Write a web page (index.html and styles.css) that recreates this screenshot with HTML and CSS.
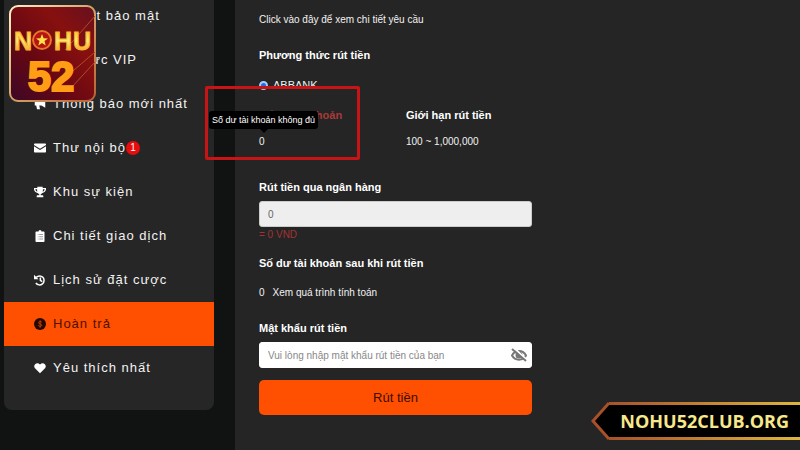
FILE: index.html
```html
<!DOCTYPE html>
<html lang="vi">
<head>
    <meta charset="UTF-8">
    <meta name="viewport" content="width=device-width, initial-scale=1.0">
    <title>Rút tiền</title>
    <link rel="stylesheet" href="styles.css">
</head>
<body>
    <div class="page">
        <nav class="sidebar">
            <a href="#" class="item"><svg class="icon" viewBox="0 0 16 16"><path d="M8 1l6 2v5c0 4-3 6-6 7-3-1-6-3-6-7V3z"/></svg>Cài đặt bảo mật</a>
            <a href="#" class="item"><svg class="icon" viewBox="0 0 16 16"><path d="M1 4l4 3 3-5 3 5 4-3-2 9H3z"/></svg>Khu vực VIP</a>
            <a href="#" class="item"><svg class="icon" viewBox="0 0 16 16"><path d="M15 1v12l-5-3H7l1 5H4l-1-5H1V4h9z"/></svg>Thông báo mới nhất</a>
            <a href="#" class="item">
                <svg class="icon" viewBox="0 0 16 16"><path d="M1 2h14q1 0 1 1v1L8 9 0 4V3q0-1 1-1zM0 5.500l8 5 8-5V13q0 1-1 1H1q-1 0-1-1z"/></svg>Thư nội bộ<span class="badge">1</span>
            </a>
            <a href="#" class="item">
                <svg class="icon" viewBox="0 0 18 16"><path d="M5 0h8v2h5v2c0 3-2.500 5-6 6-1 1-2 1-2 2v1h3q1 0 1 2v1H4v-1q0-2 1-2h3v-1c0-1-1-1-2-2-3.500-1-6-3-6-6V2h5zM2 4c0 1.500 1 2.700 3 3.500Q4.500 6 4.600 4zm14 0h-2.600q.1 2-.4 3.500c2-.8 3-2 3-3.500z"/></svg>Khu sự kiện
            </a>
            <a href="#" class="item">
                <svg class="icon" viewBox="0 0 16 16"><path d="M3 2h3q0-2 2-2t2 2h3q1 0 1 1v12q0 1-1 1H3q-1 0-1-1V3q0-1 1-1z"/><path class="cut" d="M5 6h1M7 6h5M5 9h1M7 9h5M5 12h1M7 12h5"/></svg>Chi tiết giao dịch
            </a>
            <a href="#" class="item">
                <svg class="icon" viewBox="0 0 16 16"><path class="line" d="M3 4.500a6 6 0 1 1-.5 7.500M8.500 4.500v4l2.500 1.800"/><path d="M0 1v6h6z"/></svg>Lịch sử đặt cược
            </a>
            <a href="#" class="item active">
                <svg class="icon" viewBox="0 0 16 16"><circle cx="8" cy="8" r="8"/><path class="coin" d="M10.500 5.800C10 4.600 6 4.300 6 6.300c0 2 4.500 1.300 4.500 3.400 0 2-4.200 1.800-5-.1M8.200 3v10"/></svg>Hoàn trả
            </a>
            <a href="#" class="item">
                <svg class="icon" viewBox="0 0 16 16"><path d="M8 15L1.300 8.300C-2 4.500 3.500-1.200 8 3.200c4.500-4.400 10 1.300 6.700 5.100z"/></svg>Yêu thích nhất
            </a>
        </nav>

        <main class="content">
            <form class="form">
                <p class="text">Click vào đây để xem chi tiết yêu cầu</p>

                <h3 class="title">Phương thức rút tiền</h3>
                <label class="bank"><input type="radio" name="bank" checked>ABBANK</label>

                <div class="limits">
                    <div class="balance">
                        <h3 class="title error">Số dư tài khoản</h3>
                        <p class="text">0</p>
                        <div class="highlight"></div>
                        <div class="tooltip" role="tooltip">Số dư tài khoản không đủ</div>
                    </div>
                    <div>
                        <h3 class="title">Giới hạn rút tiền</h3>
                        <p class="text">100 ~ 1,000,000</p>
                    </div>
                </div>

                <label class="title" for="amount">Rút tiền qua ngân hàng</label>
                <input class="field amount" type="text" id="amount" value="0" readonly>
                <p class="note">= 0 VND</p>

                <h3 class="title after">Số dư tài khoản sau khi rút tiền</h3>
                <p class="text calc"><span>0</span><a href="#">Xem quá trình tính toán</a></p>

                <label class="title" for="password">Mật khẩu rút tiền</label>
                <div class="password">
                    <input class="field" type="password" id="password" placeholder="Vui lòng nhập mật khẩu rút tiền của bạn">
                    <button type="button" class="eye" aria-label="Hiện mật khẩu">
                        <svg viewBox="0 0 16 14"><path d="M1 7.500C4 1.500 12 1.500 15 7.500 12 13 4 13 1 7.500z"/><circle cx="8" cy="7" r="2.500"/><path class="gap" d="M3 0l13 12"/><path class="slash" d="M1 1l14 12"/></svg>
                    </button>
                </div>

                <button type="submit" class="submit">Rút tiền</button>
            </form>
        </main>
    </div>

    <svg class="logo" viewBox="0 0 87 98" role="img" aria-label="NOHU 52">
        <defs>
            <linearGradient id="red" x1="0" y1="1" x2="1" y2="0">
                <stop offset="0" stop-color="#3b0827"/>
                <stop offset=".35" stop-color="#650713"/>
                <stop offset=".7" stop-color="#87100f"/>
                <stop offset="1" stop-color="#651020"/>
            </linearGradient>
            <linearGradient id="gold" x1="0" y1="0" x2="0" y2="1">
                <stop offset="0" stop-color="#ffb81c"/>
                <stop offset=".5" stop-color="#ffe878"/>
                <stop offset="1" stop-color="#f58a0c"/>
            </linearGradient>
            <linearGradient id="edge" x1="0" y1="0" x2="1" y2="1">
                <stop offset="0" stop-color="#fff0c9"/>
                <stop offset=".5" stop-color="#d6a164"/>
                <stop offset="1" stop-color="#ba6135"/>
            </linearGradient>
        </defs>
        <rect x="1" y="1" width="85" height="95" rx="8" fill="url(#red)" stroke="url(#edge)" stroke-width="2"/>
        <path d="M86 11L56 45M86 47L50 78M86 57L62 83" stroke="#b04a24" stroke-width="1"/>
        <g class="logo-name" fill="url(#gold)" stroke="#f7b52c" text-anchor="middle">
            <text x="14" y="45">N</text>
            <text x="54" y="45">H</text>
            <text x="73" y="45">U</text>
        </g>
        <circle cx="33" cy="35" r="9" fill="#b51412" stroke="#e8752c" stroke-width="2"/>
        <path d="M33 29l1.600 4.200 4.400.2-3.500 2.700 1.200 4.300-3.700-2.500-3.700 2.500 1.200-4.300-3.500-2.700 4.400-.2z" fill="#ffe14a"/>
        <text class="logo-number" x="42" y="86" text-anchor="middle">52</text>
    </svg>

    <a class="site" href="#">
        <svg class="arrow" viewBox="0 0 18 40"><path d="M18 2L2 20l16 18z" fill="#000"/><path d="M18 2L2 20l16 18" fill="none" stroke="#a8502a" stroke-width="3"/></svg>
        <span class="site-name">NOHU52CLUB.ORG</span>
    </a>
</body>
</html>
```
FILE: styles.css
```css
* {
    box-sizing: border-box;
}
body {
    margin: 0;
    background: #111212;
    color: #f2f2f2;
    font-family: "Liberation Sans", Arial, sans-serif;
    font-size: 10px;
    line-height: 16px;
    overflow: hidden;
}
h3, p {
    margin: 0;
}
a {
    color: inherit;
    text-decoration: none;
}
.page {
    display: grid;
    grid-template-columns: 210px 1fr;
    gap: 21px;
    min-height: 100vh;
    padding-left: 4px;
}

/* menu */
.sidebar {
    align-self: start;
    margin-top: -6px;
    padding-bottom: 20px;
    background: #262626;
    border-radius: 0 0 8px 8px;
}
.item {
    display: flex;
    align-items: center;
    gap: 7px;
    height: 44px;
    padding-left: 30px;
    font-size: 13px;
    letter-spacing: 1px;
    white-space: nowrap;
}
.item.active {
    background: #ff4f00;
    color: #4a1200;
}
.icon {
    width: 12px;
    height: 12px;
    fill: #fff;
}
.icon .line {
    fill: none;
    stroke: #fff;
    stroke-width: 2;
}
.icon .cut {
    stroke: #777;
    stroke-width: 1;
}
.active .icon {
    fill: #240800;
}
.icon .coin {
    fill: none;
    stroke: #e04a08;
    stroke-width: 1;
}
.badge {
    width: 14px;
    height: 14px;
    margin-left: -7px;
    border-radius: 50%;
    background: #e80c0c;
    color: #fff;
    font-size: 10px;
    line-height: 14px;
    letter-spacing: 0;
    text-align: center;
}

/* form */
.content {
    background: #252525;
    padding: 12px 24px;
}
.form {
    display: flex;
    flex-direction: column;
    max-width: 273px;
}
.title {
    font-size: 11px;
    font-weight: bold;
    color: #fff;
    white-space: nowrap;
}
.error {
    color: #a93a3a;
}
.text + .title {
    margin-top: 19px;
}
.bank {
    display: flex;
    align-items: center;
    gap: 5px;
    margin: 14px 0;
    font-size: 11px;
}
.bank input {
    appearance: none;
    width: 9px;
    height: 9px;
    margin: 0;
    border: 2px solid #a9ccff;
    border-radius: 50%;
    background: #1f6fe0;
}
.limits {
    display: grid;
    grid-template-columns: 147px 1fr;
    margin-bottom: 29px;
}
.limits .text {
    margin-top: 11px;
}
.balance {
    position: relative;
}
.highlight {
    position: absolute;
    top: -21px;
    left: -54px;
    width: 155px;
    height: 74px;
    border: 3px solid #c81414;
    border-radius: 2px;
}
.tooltip {
    position: absolute;
    top: 4px;
    left: -50px;
    padding: 0 3px;
    height: 18px;
    border-radius: 3px;
    background: #000;
    color: #fff;
    font-size: 9px;
    line-height: 18px;
    white-space: nowrap;
}
.tooltip::after {
    content: "";
    position: absolute;
    top: 100%;
    left: 50%;
    margin-left: -4px;
    border: 4px solid transparent;
    border-top-color: #000;
}
.field {
    width: 100%;
    height: 26px;
    margin-top: 6px;
    padding: 0 8px;
    border: 1px solid #fff;
    border-radius: 3px;
    background: #fff;
    color: #666;
    font-family: inherit;
    font-size: 10px;
}
.field::placeholder {
    color: #888;
}
.amount {
    border-color: #ccc;
    background: #eee;
}
.note {
    color: #a03434;
}
.after {
    margin: 12px 0 14px;
}
.calc {
    display: flex;
    gap: 8px;
}
.password {
    position: relative;
}
.eye {
    position: absolute;
    right: 5px;
    bottom: 5px;
    width: 16px;
    height: 16px;
    padding: 0;
    border: 0;
    background: none;
}
.eye svg {
    display: block;
    width: 16px;
    height: 14px;
    fill: none;
    stroke: #777;
    stroke-width: 2;
}
.eye circle {
    fill: #777;
}
.eye .gap {
    stroke: #fff;
}
.submit {
    height: 35px;
    margin-top: 12px;
    border: 0;
    border-radius: 5px;
    background: #ff4f00;
    color: #3a0d00;
    font-family: inherit;
    font-size: 13px;
}

/* logo over the menu */
.logo {
    position: absolute;
    top: 5px;
    left: 9px;
    width: 87px;
    height: 98px;
}
.logo-name {
    font-family: "Liberation Sans", sans-serif;
    font-size: 25px;
    font-weight: bold;
}
.logo-number {
    fill: #ff9d14;
    stroke: #ff9d14;
    stroke-width: 2;
    font-family: "Liberation Sans", sans-serif;
    font-size: 42px;
    font-weight: bold;
}

/* site ribbon */
.site {
    position: fixed;
    right: 0;
    bottom: 9px;
    display: flex;
    height: 40px;
}
.arrow {
    width: 18px;
    height: 40px;
}
.site-name {
    margin: 1px 0;
    padding: 0 11px;
    border: solid;
    border-width: 3px 0;
    border-image: linear-gradient(to right, #a8502a, #e0b83c) 3;
    background: #000;
    color: #f8e88c;
    font-family: "Open Sans", sans-serif;
    font-size: 18px;
    font-weight: bold;
    line-height: 33px;
}
```
